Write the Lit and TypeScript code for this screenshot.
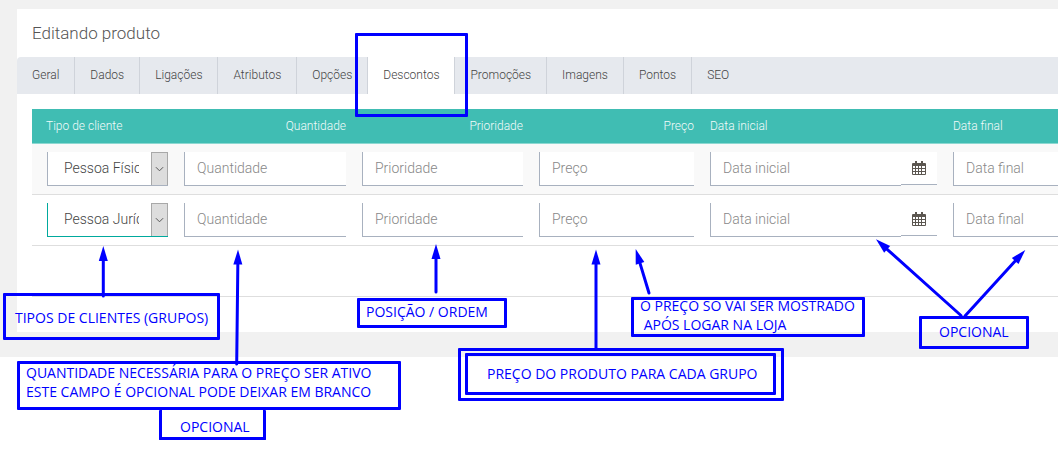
import { LitElement, html, css, svg } from "lit";
import { customElement } from "lit/decorators.js";

const tabs = ["Geral", "Dados", "Ligações", "Atributos", "Opções", "Descontos", "Promoções", "Imagens", "Pontos", "SEO"];

const calendar = html`<svg class="cal" viewBox="0 0 14 14" width="14" height="14">
  <path fill="#5b5650" fill-rule="evenodd" d="M3 0h2v2h4V0h2v2h2a1 1 0 0 1 1 1v10a1 1 0 0 1-1 1H1a1 1 0 0 1-1-1V3a1 1 0 0 1 1-1h2zM1 5v2h2V5zm3 0v2h2V5zm3 0v2h2V5zm3 0v2h3V5zM1 8v2h2V8zm3 0v2h2V8zm3 0v2h2V8zm3 0v2h3V8zM1 11v2h2v-2zm3 0v2h2v-2zm3 0v2h2v-2zm3 0v2h3v-2z"/>
</svg>`;

const chevron = html`<svg viewBox="0 0 10 6" width="9" height="6"><path d="M1 1l4 4 4-4" fill="none" stroke="#555" stroke-width="1.1"/></svg>`;

type Arrow = [number, number, number, number];
const arrows: Arrow[] = [
  [103.3, 296, 103.3, 246],
  [236.7, 364, 238, 249.5],
  [436, 292, 436, 244],
  [596, 349, 596, 249.5],
  [649, 293, 635.7, 249],
  [961, 315.5, 876, 239.3],
  [965, 316, 1025.3, 250],
];

function arrowSvg([x1, y1, x2, y2]: Arrow) {
  const len = Math.hypot(x2 - x1, y2 - y1);
  const ux = (x2 - x1) / len;
  const uy = (y2 - y1) / len;
  const h = 15;
  const w = 4.5;
  const bx = x2 - ux * h;
  const by = y2 - uy * h;
  const pts = `${x2},${y2} ${bx - uy * w},${by + ux * w} ${bx + uy * w},${by - ux * w}`;
  return svg`<line x1=${x1} y1=${y1} x2=${bx} y2=${by} stroke="#0000ff" stroke-width="3" stroke-linecap="round"/><polygon points=${pts} fill="#0000ff"/>`;
}

@customElement("app-root")
export class AppRoot extends LitElement {
  static styles = css`
    :host {
      display: block;
      position: relative;
      width: 1058px;
      height: 452px;
      overflow: hidden;
      background: #fff;
      font-family: Roboto, sans-serif;
    }
    .page {
      background: #f1f1f1;
      height: 357px;
      padding: 9px 0 0 17px;
      box-sizing: border-box;
      overflow: hidden;
    }
    .card {
      background: #fff;
      height: 323px;
      width: 1100px;
    }
    .title {
      height: 48px;
      box-sizing: border-box;
      padding: 14px 0 0 15px;
      font-size: 17px;
      font-weight: 300;
      line-height: 20px;
      color: #555;
    }
    .tabs {
      display: flex;
      height: 37px;
      background: #e6e9ee;
      border-top-left-radius: 4px;
    }
    .tab {
      padding: 0 15px;
      font-size: 12px;
      font-weight: 300;
      line-height: 37px;
      color: #444;
      border-right: 1px solid #cfd3da;
    }
    .tab:last-child {
      border-right: none;
    }
    .tab.active {
      background: #fff;
    }
    .table {
      margin: 15px 0 0 15px;
      width: 1085px;
    }
    .grid {
      display: grid;
      grid-template-columns: 121px 162px 161px 155px 227px 150px;
      column-gap: 16px;
      padding-left: 15px;
    }
    .head {
      height: 35px;
      box-sizing: border-box;
      background: #40bdb3;
      border-bottom: 1px solid #8cd8d1;
      color: #f2fbfa;
      font-size: 12px;
      font-weight: 300;
      line-height: 34px;
    }
    .head > :first-child {
      margin-left: -1px;
    }
    .right {
      text-align: right;
    }
    .row {
      height: 51px;
      box-sizing: border-box;
      padding-top: 8px;
      border-bottom: 1px solid #dedede;
    }
    .row.odd {
      background: #f9f9f9;
    }
    .row.blank {
      padding: 0;
    }
    .field {
      height: 34px;
      box-sizing: border-box;
      background: #fff;
      border-left: 1px solid #a8b1bf;
      border-bottom: 1px solid #a8b1bf;
      padding-left: 12px;
      font-size: 14px;
      font-weight: 300;
      line-height: 32px;
      color: #888;
      white-space: nowrap;
      overflow: hidden;
    }
    .select {
      display: flex;
      height: 34px;
      box-sizing: border-box;
      background: #fff;
      border-left: 1px solid #a8b1bf;
      border-bottom: 1px solid #a8b1bf;
      font-size: 14px;
      font-weight: 300;
      line-height: 32px;
      color: #444;
    }
    .select.on {
      border-color: #00a99d;
    }
    .select .value {
      width: 75px;
      margin-left: 16px;
      margin-right: 12px;
      overflow: hidden;
      white-space: nowrap;
    }
    .select .btn {
      width: 17px;
      flex: none;
      box-sizing: border-box;
      height: 33px;
      background: #ddd;
      border: 1px solid #a8a8a8;
      border-bottom: none;
      display: flex;
      align-items: center;
      justify-content: center;
    }
    .date {
      display: flex;
      height: 34px;
    }
    .date .field {
      flex: 1;
    }
    .addon {
      width: 36px;
      height: 33px;
      background: #fff;
      border-bottom: 1px solid #a8b1bf;
      box-sizing: border-box;
      display: flex;
      align-items: center;
      justify-content: center;
    }
    .cal {
      display: block;
    }
    .note {
      position: absolute;
      box-sizing: border-box;
      border: 3px solid #0000ff;
      border-radius: 1px;
      color: #0000ff;
      font-family: "Open Sans", sans-serif;
      font-size: 14px;
      line-height: 19px;
      white-space: pre;
      background: transparent;
    }
    .overlay {
      position: absolute;
      inset: 0;
      pointer-events: none;
    }
    .n-tab { left: 355px; top: 33px; width: 113px; height: 84px; }
    .n-types { left: 3px; top: 293px; width: 217px; height: 47px; padding: 12px 0 0 9px; }
    .n-pos { left: 357px; top: 298px; width: 150px; height: 30px; padding: 1px 0 0 6px; }
    .n-qty { left: 17px; top: 361px; width: 384px; height: 49px; padding: 0 0 0 6px; }
    .n-qty .lines { margin-top: -1px; }
    .n-opt1 { left: 159px; top: 410px; width: 107px; height: 30px; padding: 7px 0 0 18px; border-top-width: 0; }
    .n-price-o { left: 458px; top: 348px; width: 326px; height: 53px; }
    .n-price-i { left: 465px; top: 353px; width: 311px; height: 42px; padding: 8px 0 0 19px; }
    .n-login { left: 631px; top: 297px; width: 234px; height: 40px; padding: 0 0 0 6px; }
    .n-login .lines { margin-top: -4px; }
    .n-opt2 { left: 919px; top: 316px; width: 110px; height: 33px; padding: 3px 0 0 17px; }
  `;

  private renderRow(label: string, cls: string, active: boolean) {
    return html`<div class="grid row ${cls}">
      <div class="select ${active ? "on" : ""}">
        <div class="value">${label}</div>
        <div class="btn">${chevron}</div>
      </div>
      <div class="field">Quantidade</div>
      <div class="field">Prioridade</div>
      <div class="field">Preço</div>
      <div class="date">
        <div class="field">Data inicial</div>
        <div class="addon">${calendar}</div>
      </div>
      <div class="field">Data final</div>
    </div>`;
  }

  render() {
    return html`
      <div class="page">
        <div class="card">
          <div class="title">Editando produto</div>
          <div class="tabs">
            ${tabs.map((t) => html`<div class="tab ${t === "Descontos" ? "active" : ""}">${t}</div>`)}
          </div>
          <div class="table">
            <div class="grid head">
              <div>Tipo de cliente</div>
              <div class="right">Quantidade</div>
              <div class="right">Prioridade</div>
              <div class="right">Preço</div>
              <div>Data inicial</div>
              <div>Data final</div>
            </div>
            ${this.renderRow("Pessoa Física", "odd", false)}
            ${this.renderRow("Pessoa Jurídica", "", true)}
            <div class="row blank"></div>
          </div>
        </div>
      </div>
      <svg class="overlay" width="1058" height="452" viewBox="0 0 1058 452">${arrows.map(arrowSvg)}</svg>
      <div class="note n-tab"></div>
      <div class="note n-types">TIPOS DE CLIENTES (GRUPOS)</div>
      <div class="note n-pos">POSIÇÃO / ORDEM</div>
      <div class="note n-qty"><div class="lines">QUANTIDADE NECESSÁRIA PARA O PREÇO SER ATIVO
ESTE CAMPO É OPCIONAL PODE DEIXAR EM BRANCO</div></div>
      <div class="note n-opt1">OPCIONAL</div>
      <div class="note n-price-o"></div>
      <div class="note n-price-i">PREÇO DO PRODUTO PARA CADA GRUPO</div>
      <div class="note n-login"><div class="lines">O PREÇO SO VAI SER MOSTRADO
 APÓS LOGAR NA LOJA</div></div>
      <div class="note n-opt2">OPCIONAL</div>
    `;
  }
}
